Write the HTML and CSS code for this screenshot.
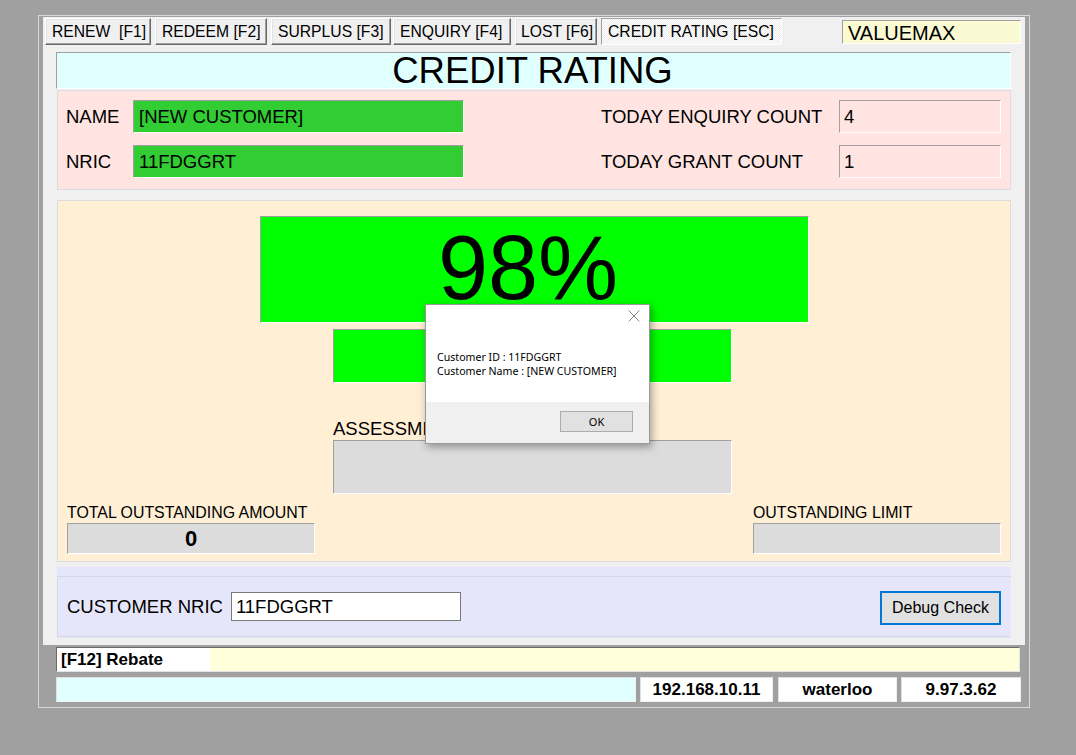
FILE: index.html
```html
<!DOCTYPE html>
<html>
<head>
<meta charset="utf-8">
<link rel="stylesheet" href="styles.css">
</head>
<body>
<div class="window">
  <div class="panel">
    <div class="toolbar">
      <div class="tabs">
        <div class="tab w1">RENEW&nbsp; [F1]</div>
        <div class="tab w2">REDEEM [F2]</div>
        <div class="tab w3">SURPLUS [F3]</div>
        <div class="tab w4">ENQUIRY [F4]</div>
        <div class="tab w5">LOST [F6]</div>
        <div class="tab tab-active w6">CREDIT RATING [ESC]</div>
      </div>
      <div class="brand">VALUEMAX</div>
    </div>

    <div class="title">CREDIT RATING</div>

    <div class="info">
      <div class="info-grid info-left">
        <div class="lbl">NAME</div>
        <div class="field field-green">[NEW CUSTOMER]</div>
        <div class="lbl">NRIC</div>
        <div class="field field-green">11FDGGRT</div>
      </div>
      <div class="info-grid info-right">
        <div class="lbl">TODAY ENQUIRY COUNT</div>
        <div class="field field-pink">4</div>
        <div class="lbl">TODAY GRANT COUNT</div>
        <div class="field field-pink">1</div>
      </div>
    </div>

    <div class="rating">
      <div class="score">98%</div>
      <div class="col">
        <div class="grade"></div>
        <div class="assess-lbl">ASSESSMENT</div>
        <div class="assess-box"></div>
      </div>
      <div class="amounts">
        <div class="amount">
          <div class="amount-lbl">TOTAL OUTSTANDING AMOUNT</div>
          <div class="amount-box">0</div>
        </div>
        <div class="amount">
          <div class="amount-lbl">OUTSTANDING LIMIT</div>
          <div class="amount-box"></div>
        </div>
      </div>
    </div>

    <div class="search">
      <div class="search-inner">
        <div class="search-left">
          <span class="lbl">CUSTOMER NRIC</span>
          <div class="text-input">11FDGGRT</div>
        </div>
        <button class="debug-btn">Debug Check</button>
      </div>
    </div>
  </div>

  <div class="status1">
    <div class="rebate">[F12] Rebate</div>
    <div class="status1-fill"></div>
  </div>
  <div class="status2">
    <div class="cell cell-cyan"></div>
    <div class="cell cell-ip">192.168.10.11</div>
    <div class="cell cell-branch">waterloo</div>
    <div class="cell cell-ver">9.97.3.62</div>
  </div>

  <div class="dialog">
    <div class="dialog-body">
      <div class="dialog-close">
        <svg width="12" height="12" viewBox="0 0 12 12"><path d="M0.5 0.5 L11.5 11.5 M11.5 0.5 L0.5 11.5" stroke="#8a8a8a" stroke-width="1" fill="none"/></svg>
      </div>
      <div class="dialog-text">Customer ID : 11FDGGRT<br>Customer Name : [NEW CUSTOMER]</div>
    </div>
    <div class="dialog-foot">
      <button class="ok-btn">OK</button>
    </div>
  </div>
</div>
</body>
</html>
```

FILE: styles.css
```css
* { box-sizing: border-box; }
html, body { margin: 0; padding: 0; }
body {
  background: #a0a0a0;
  font-family: "Liberation Sans", Arial, sans-serif;
  color: #000;
  width: 1076px;
  height: 755px;
  overflow: hidden;
}
.window {
  position: relative;
  margin: 15px 0 0 38px;
  width: 992px;
  height: 693px;
  border: 1px solid #d9d9d9;
  padding: 1px 4px 0 4px;
}
.panel {
  width: 982px;
  height: 628px;
  background: #f0f0f0;
  padding: 1px 0 0 2px;
}
.toolbar {
  display: flex;
  align-items: flex-start;
  justify-content: space-between;
  padding-right: 4px;
}
.tabs { display: flex; }
.tab {
  height: 27px;
  font-size: 15.7px;
  line-height: 25px;
  padding-left: 6px;
  white-space: nowrap;
  background: #f0f0f0;
  border: 1px solid;
  border-color: #ffffff #696969 #696969 #ffffff;
  box-shadow: inset -1px -1px 0 #a0a0a0, inset 1px 1px 0 #e3e3e3;
  margin-right: 4px;
}
.w1 { width: 106px; }
.w2 { width: 112px; padding-left: 6px; }
.w3 { width: 120px; padding-left: 6px; margin-right: 2px; }
.w4 { width: 118px; padding-left: 6px; margin-right: 4px; }
.w5 { width: 82px; padding-left: 5px; }
.w6 { width: 181px; padding-left: 6px; margin-right: 0; }
.tab-active {
  background-color: #fbfbfb;
  background-image: repeating-conic-gradient(#ffffff 0 25%, #ececec 0 50%);
  background-size: 2px 2px;
  border-color: #a0a0a0 #ffffff #ffffff #a0a0a0;
  box-shadow: none;
}
.brand {
  margin-top: 2px;
  width: 179px;
  height: 24px;
  background: #fafad2;
  border: 1px solid;
  border-color: #a0a0a0 #ffffff #ffffff #a0a0a0;
  font-size: 20px;
  line-height: 24px;
  padding-left: 5px;
}
.title {
  margin: 7px 0 0 11px;
  width: 955px;
  height: 37px;
  background: #e0ffff;
  border: 1px solid;
  border-color: #a0a0a0 #ffffff #ffffff #a0a0a0;
  text-align: center;
  font-size: 36.5px;
  line-height: 36px;
  padding-right: 2px;
}
.info {
  margin: 1px 0 0 12px;
  width: 954px;
  height: 100px;
  background: #ffe4e1;
  border: 1px solid #dcdcdc;
  padding: 9px 9px 0 8px;
  display: flex;
  align-items: flex-start;
  justify-content: space-between;
}
.info-grid {
  display: grid;
  row-gap: 12px;
  align-items: center;
  align-content: start;
}
.info-left { grid-template-columns: 67px 331px; }
.info-right { grid-template-columns: 238px 162px; }
.lbl { font-size: 18.5px; white-space: nowrap; }
.field {
  height: 33px;
  border: 1px solid;
  border-color: #a0a0a0 #ffffff #ffffff #a0a0a0;
  font-size: 18.5px;
  line-height: 31px;
  padding-left: 5px;
}
.field-green { background: #32cd32; }
.field-pink { background: #ffe4e1; padding-left: 4px; }

.rating {
  margin: 10px 0 0 12px;
  width: 954px;
  height: 362px;
  background: #ffefd5;
  border: 1px solid #dcdcdc;
  padding: 15px 9px 0 9px;
}
.score {
  margin: 0 auto;
  width: 549px;
  height: 107px;
  background: #00ff00;
  border: 1px solid;
  border-color: #a0a0a0 #ffffff #ffffff #a0a0a0;
  text-align: center;
  font-size: 90px;
  line-height: 102px;
  padding-right: 12px;
  overflow: hidden;
}
.col {
  margin: 6px 0 0 266px;
  width: 399px;
}
.grade {
  height: 54px;
  background: #00ff00;
  border: 1px solid;
  border-color: #a0a0a0 #ffffff #ffffff #a0a0a0;
}
.assess-lbl {
  margin-top: 34px;
  font-size: 18.5px;
  line-height: 23px;
}
.assess-box {
  height: 54px;
  background: #dcdcdc;
  border: 1px solid;
  border-color: #a0a0a0 #ffffff #ffffff #a0a0a0;
}
.amounts {
  margin-top: 9px;
  display: flex;
  justify-content: space-between;
}
.amount { width: 248px; }
.amount-lbl {
  font-size: 15.9px;
  line-height: 20px;
  white-space: nowrap;
}
.amount-box {
  height: 31px;
  background: #dcdcdc;
  border: 1px solid;
  border-color: #a0a0a0 #ffffff #ffffff #a0a0a0;
  text-align: center;
  font-weight: bold;
  font-size: 22px;
  line-height: 30px;
}
.search {
  margin: 5px 0 0 12px;
  width: 954px;
  height: 71px;
  background: #e6e6fa;
  padding-top: 9px;
}
.search-inner {
  height: 61px;
  border-top: 1px solid #d6d6e4;
  border-bottom: 1px solid #d6d6e4;
  border-left: 1px solid #d6d6e4;
  display: flex;
  align-items: center;
  justify-content: space-between;
  padding: 0 10px 0 9px;
}
.search-left { display: flex; align-items: center; gap: 8px; }
.text-input {
  width: 230px;
  height: 29px;
  background: #fff;
  border: 1px solid #7a7a7a;
  font-size: 18.5px;
  line-height: 27px;
  padding-left: 4px;
}
.debug-btn {
  width: 121px;
  height: 34px;
  margin-top: 2px;
  background: #e1e1e1;
  border: 2px solid #0078d7;
  font-family: "Liberation Sans", Arial, sans-serif;
  font-size: 16px;
  color: #000;
  padding: 0;
}
.status1 {
  margin: 2px 0 0 13px;
  width: 964px;
  height: 25px;
  display: flex;
  border: 1px solid;
  border-color: #696969 #e3e3e3 #e3e3e3 #696969;
}
.rebate {
  width: 153px;
  background: #fff;
  font-weight: bold;
  font-size: 17px;
  line-height: 23px;
  padding-left: 4px;
}
.status1-fill { flex: 1; background: #ffffdc; }
.status2 {
  margin: 5px 0 0 13px;
  width: 965px;
  height: 25px;
  display: flex;
  gap: 4px;
}
.cell {
  height: 25px;
  background: #fff;
  border: 1px solid;
  border-color: #e0e0e0 #f0f0f0 #f0f0f0 #e0e0e0;
  font-weight: bold;
  font-size: 17px;
  line-height: 23px;
  text-align: center;
}
.cell-cyan { width: 580px; background: #e0ffff; }
.cell-ip { width: 133px; }
.cell-branch { width: 119px; margin-left: 1px; }
.cell-ver { width: 120px; }

.dialog {
  position: absolute;
  left: 386px;
  top: 288px;
  width: 225px;
  height: 140px;
  background: #fff;
  border: 1px solid #9a9a9a;
  box-shadow: 2px 3px 8px rgba(0,0,0,0.35);
  display: flex;
  flex-direction: column;
}
.dialog-body {
  flex: 1;
  padding: 5px 9px 0 11px;
}
.dialog-close {
  display: flex;
  justify-content: flex-end;
}
.dialog-text {
  margin-top: 29px;
  font-family: "Noto Sans", "Open Sans", sans-serif;
  font-size: 10.6px;
  line-height: 13.5px;
  color: #000;
}
.dialog-foot {
  height: 41px;
  background: #f0f0f0;
  display: flex;
  justify-content: flex-end;
  padding: 9px 16px 0 0;
}
.ok-btn {
  width: 73px;
  height: 21px;
  background: #e1e1e1;
  border: 1px solid #adadad;
  font-family: "Noto Sans", "Open Sans", sans-serif;
  font-size: 11px;
  color: #000;
  padding: 0;
}
```
